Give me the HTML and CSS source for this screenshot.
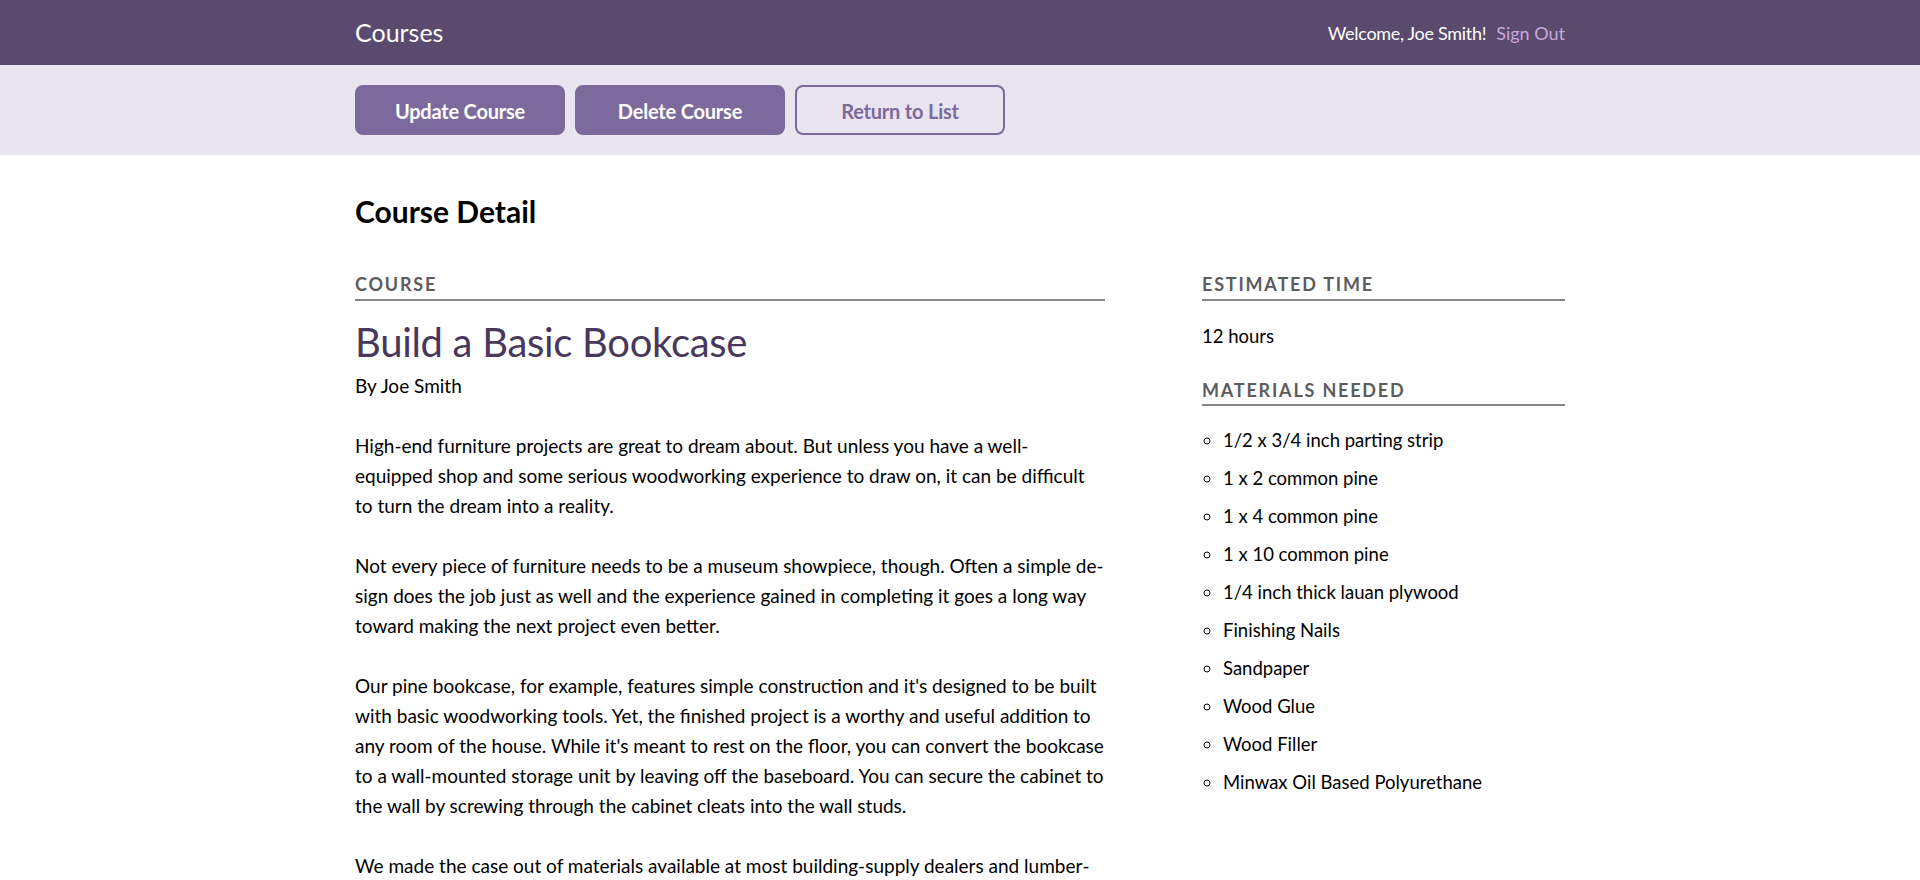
FILE: index.html
```html
<!DOCTYPE html>
<html lang="en">
<head>
<meta charset="utf-8">
<title>Courses</title>
<link rel="stylesheet" href="styles.css">
</head>
<body>
<header class="header">
  <div class="wrap header-bar">
    <h1 class="logo">Courses</h1>
    <nav class="user-nav">
      <span class="welcome">Welcome, Joe Smith!</span>
      <a class="signout" href="#">Sign Out</a>
    </nav>
  </div>
</header>
<div class="actions">
  <div class="wrap actions-row">
    <a class="button" href="#">Update Course</a>
    <a class="button" href="#">Delete Course</a>
    <a class="button button-secondary" href="#">Return to List</a>
  </div>
</div>
<main class="wrap">
  <h2 class="page-title">Course Detail</h2>
  <div class="detail">
    <section class="main-col">
      <h3 class="label">Course</h3>
      <h4 class="course-title">Build a Basic Bookcase</h4>
      <p class="author">By Joe Smith</p>
      <p>High-end furniture projects are great to dream about. But unless you have a well-equipped shop and some serious woodworking experience to draw on, it can be difficult to turn the dream into a reality.</p>
      <p>Not every piece of furniture needs to be a museum showpiece, though. Often a simple de&shy;sign does the job just as well and the experience gained in completing it goes a long way toward making the next project even better.</p>
      <p>Our pine bookcase, for example, features simple construction and it's designed to be built with basic woodworking tools. Yet, the finished project is a worthy and useful addition to any room of the house. While it's meant to rest on the floor, you can convert the bookcase to a wall-mounted storage unit by leaving off the baseboard. You can secure the cabinet to the wall by screwing through the cabinet cleats into the wall studs.</p>
      <p>We made the case out of materials available at most building-supply dealers and lumber&shy;yards, including 1/2 x 3/4-inch parting strip, 1 x 2, 1 x 4 and 1 x 10 common pine and 1/4-inch-thick lauan plywood. Assembly is quick and easy with glue and nails, and when you're done with construction you have the option of a painted or clear finish.</p>
    </section>
    <aside class="side-col">
      <h3 class="label">Estimated Time</h3>
      <p class="time">12 hours</p>
      <h3 class="label">Materials Needed</h3>
      <ul class="materials">
        <li>1/2 x 3/4 inch parting strip</li>
        <li>1 x 2 common pine</li>
        <li>1 x 4 common pine</li>
        <li>1 x 10 common pine</li>
        <li>1/4 inch thick lauan plywood</li>
        <li>Finishing Nails</li>
        <li>Sandpaper</li>
        <li>Wood Glue</li>
        <li>Wood Filler</li>
        <li>Minwax Oil Based Polyurethane</li>
      </ul>
    </aside>
  </div>
</main>
</body>
</html>
```
FILE: styles.css
```css
* { box-sizing: border-box; }

body {
  margin: 0;
  font-family: Lato, "Liberation Sans", sans-serif;
  font-size: 19px;
  line-height: 30px;
  color: #000;
  background: #fff;
}

.wrap {
  width: 1210px;
  margin: 0 auto;
}

.header {
  background: #594a6e;
  height: 65px;
}

.header-bar {
  height: 65px;
  display: flex;
  align-items: center;
  justify-content: space-between;
}

.logo {
  margin: 0;
  font-family: Lato, sans-serif;
  font-weight: 400;
  font-size: 25px;
  color: #fff;
  line-height: 1;
}

.user-nav {
  display: flex;
  gap: 10px;
  font-size: 18px;
}

.welcome {
  color: #fff;
  letter-spacing: -0.3px;
}

.signout {
  color: #c9a8d9;
  text-decoration: none;
}

.actions {
  background: #e8e4f0;
  padding: 20px 0;
}

.actions-row {
  display: flex;
  gap: 10px;
}

.button {
  width: 210px;
  height: 50px;
  display: flex;
  align-items: center;
  justify-content: center;
  padding-top: 1px;
  background: #7c6a9c;
  border: 2px solid #7c6a9c;
  border-radius: 8px;
  color: #fff;
  font-family: Lato, sans-serif;
  font-weight: 700;
  font-size: 20px;
  letter-spacing: -0.2px;
  text-decoration: none;
}

.button-secondary {
  background: transparent;
  color: #7c6a9c;
}

.page-title {
  margin: 38px 0 0;
  font-size: 30px;
  font-weight: 700;
  line-height: 36px;
}

.detail {
  display: flex;
  justify-content: space-between;
  margin-top: 45px;
}

.main-col { width: 62%; }

.side-col {
  width: 30%;
  font-size: 18.5px;
}

.label {
  margin: 0;
  padding-bottom: 3px;
  border-bottom: 2px solid #888;
  font-size: 18px;
  font-weight: 700;
  line-height: 21.6px;
  letter-spacing: 1.8px;
  text-transform: uppercase;
  color: #5c5c5c;
}

.course-title {
  margin: 17px 0 0;
  font-size: 40px;
  font-weight: 400;
  line-height: 48px;
  letter-spacing: -0.3px;
  color: #47385c;
}

.main-col p {
  margin: 30px 0 0;
  hyphens: manual;
}

.main-col .author { margin-top: 5px; }

.side-col .time {
  margin: 20px 0 29px;
}

.materials {
  margin: 19px 0 0;
  padding-left: 21px;
  list-style: circle;
}

.materials li { margin-bottom: 8px; }
```
